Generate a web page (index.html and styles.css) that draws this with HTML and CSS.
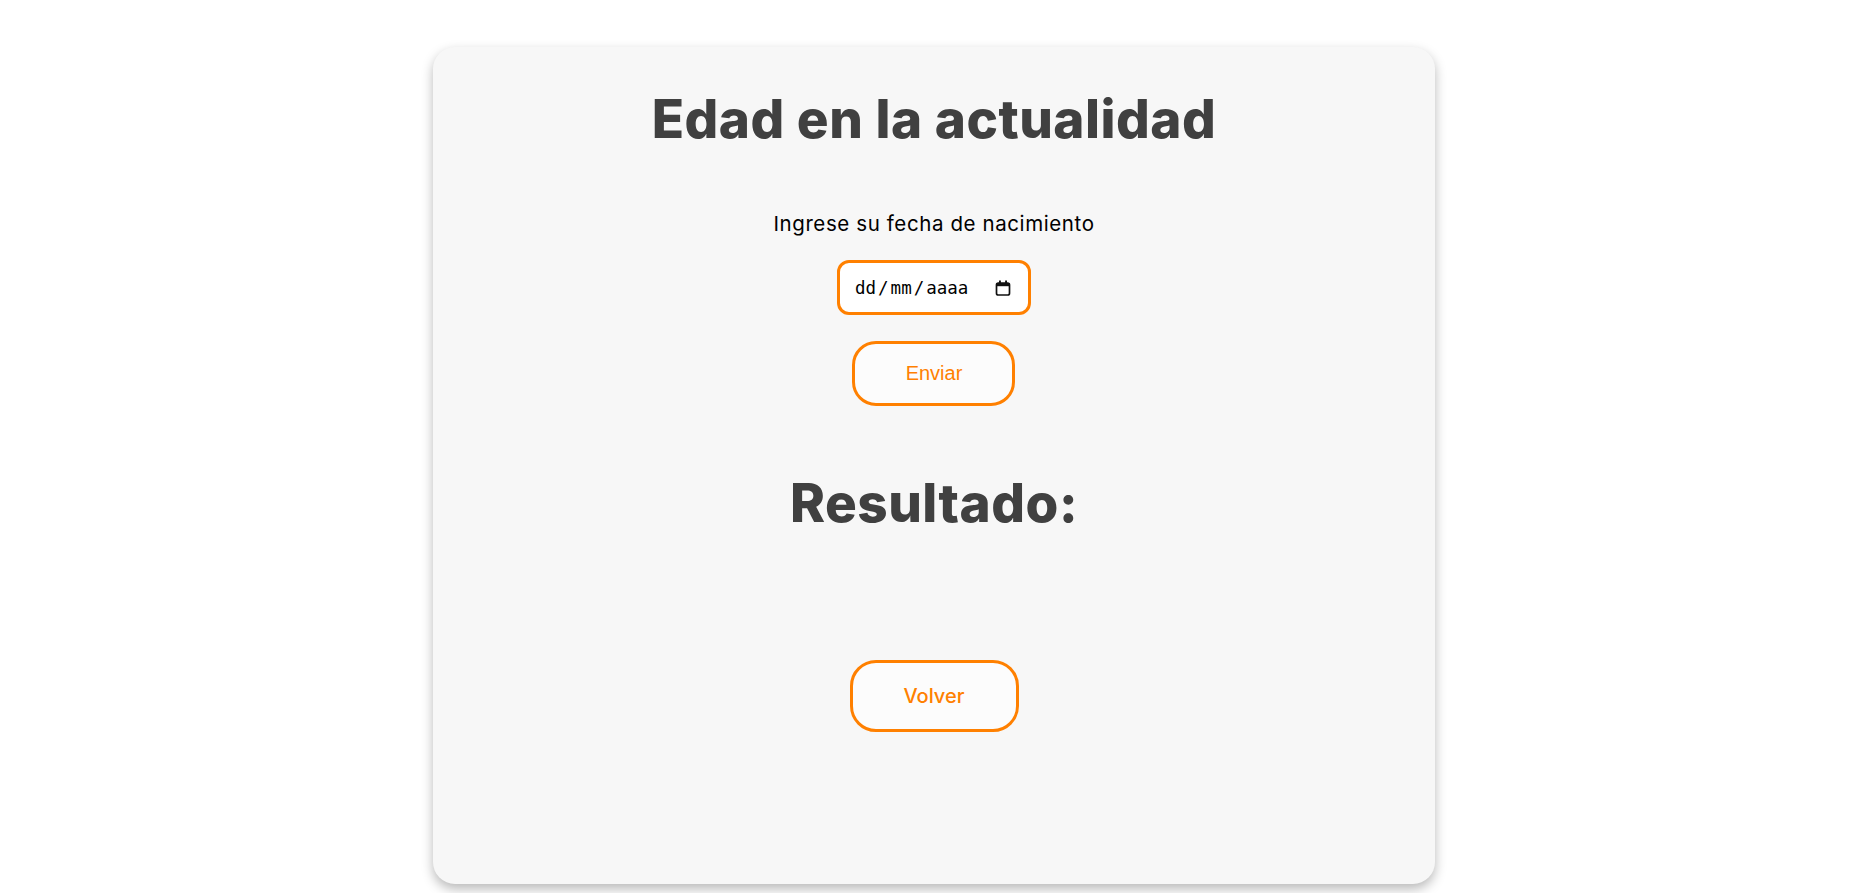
FILE: index.html
```html
<!DOCTYPE html>
<html lang="es">
<head>
<meta charset="utf-8">
<title>Edad en la actualidad</title>
<link rel="stylesheet" href="styles.css">
</head>
<body>
<main class="card">
  <h1 class="title">Edad en la actualidad</h1>
  <form class="form">
    <label class="label" for="fecha">Ingrese su fecha de nacimiento</label>
    <div class="date" id="fecha">
      <span class="date-text">dd<span class="sep">/</span>mm<span class="sep">/</span>aaaa</span>
      <svg class="cal" width="16" height="16" viewBox="0 0 16 16" aria-hidden="true">
        <rect x="1.5" y="3" width="13" height="12" rx="1.8" fill="none" stroke="#111" stroke-width="1.7"/>
        <rect x="1.5" y="3" width="13" height="3.2" fill="#111"/>
        <rect x="4" y="0.5" width="1.9" height="3.5" fill="#111"/>
        <rect x="10.1" y="0.5" width="1.9" height="3.5" fill="#111"/>
      </svg>
    </div>
    <button class="btn btn-send" type="button">Enviar</button>
  </form>
  <h2 class="title result">Resultado:</h2>
  <div class="output"></div>
  <button class="btn btn-back" type="button">Volver</button>
</main>
</body>
</html>
```
FILE: styles.css
```css
html, body {
  margin: 0;
  padding: 0;
  background: #ffffff;
}
body {
  font-family: Inter, "Noto Sans", sans-serif;
  display: flex;
  justify-content: center;
  padding-top: 47px;
  min-height: 893px;
  box-sizing: border-box;
}
.card {
  width: 1002px;
  height: 837px;
  box-sizing: border-box;
  background: #f7f7f7;
  border-radius: 22px;
  box-shadow: 0 5px 12px rgba(0, 0, 0, 0.28);
  display: flex;
  flex-direction: column;
  align-items: center;
  padding-top: 39px;
}
.title {
  margin: 0;
  font-family: Inter, "Noto Sans", sans-serif;
  font-weight: 800;
  font-size: 53px;
  line-height: 66px;
  color: #404040;
  letter-spacing: 0.5px;
}
.form {
  display: flex;
  flex-direction: column;
  align-items: center;
  margin-top: 58px;
}
.label {
  font-size: 20.5px;
  line-height: 28px;
  color: #000;
  letter-spacing: 0.6px;
}
.date {
  margin-top: 22px;
  width: 194px;
  height: 55px;
  box-sizing: border-box;
  border: 3px solid #ff8000;
  border-radius: 12px;
  background: #fff;
  padding: 0 17px 0 15px;
  display: flex;
  align-items: center;
  justify-content: space-between;
}
.date-text {
  font-family: "DejaVu Sans Mono", "Liberation Mono", monospace;
  font-size: 17.5px;
  line-height: 20px;
  color: #000;
}
.sep {
  margin: 0 2px;
}
.cal {
  display: block;
}
.btn {
  box-sizing: border-box;
  border: 3px solid #ff8000;
  background: #fcfcfc;
  color: #ff8000;
  font-size: 20px;
  cursor: pointer;
}
.btn-send {
  margin-top: 26px;
  width: 163px;
  height: 65px;
  border-radius: 24px;
  font-family: "Liberation Sans", Arial, sans-serif;
}
.result {
  margin-top: 64px;
}
.output {
  height: 124px;
}
.btn-back {
  width: 169px;
  height: 72px;
  border-radius: 26px;
  font-family: Inter, "Noto Sans", sans-serif;
  font-weight: 500;
}
```
